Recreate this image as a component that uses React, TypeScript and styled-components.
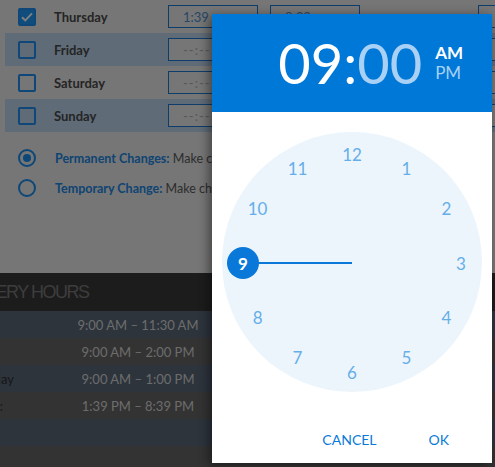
import React from 'react';
import styled, { createGlobalStyle } from 'styled-components';

const GlobalStyle = createGlobalStyle`
  html, body { margin: 0; padding: 0; }
  body { font-family: Lato, "Open Sans", "Liberation Sans", sans-serif; background: #767676; }
`;

const Viewport = styled.div`
  position: relative;
  width: 495px;
  height: 467px;
  overflow: hidden;
  background: #ececec;
`;

const Schedule = styled.section`
  height: 273px;
  background: #ececec;
  display: flex;
  flex-direction: column;
`;

const DayRow = styled.div<{ $striped?: boolean }>`
  height: 33px;
  margin-left: 5px;
  padding-left: 13px;
  display: flex;
  align-items: center;
  background: ${p => (p.$striped ? '#bed6ee' : 'transparent')};
`;

const Check = styled.span<{ $checked?: boolean }>`
  box-sizing: border-box;
  width: 18px;
  height: 18px;
  border: 2px solid #1c8ef0;
  border-radius: 2px;
  background: ${p => (p.$checked ? '#1c9af8' : 'transparent')};
  display: flex;
  align-items: center;
  justify-content: center;
  flex: none;
`;

const DayName = styled.span`
  margin-left: 18px;
  width: 114px;
  flex: none;
  font-size: 13px;
  font-weight: 700;
  color: #4a4a4a;
`;

const TimeBox = styled.span<{ $gap: number; $filled?: boolean }>`
  box-sizing: border-box;
  margin-left: ${p => p.$gap}px;
  width: 90px;
  height: 23px;
  flex: none;
  border: 1px solid #1c7ad8;
  background: #ececec;
  display: flex;
  align-items: center;
  padding-left: 14px;
  font-size: 13px;
  color: ${p => (p.$filled ? '#4f8fd0' : '#b0b0b0')};
  letter-spacing: ${p => (p.$filled ? '0' : '1px')};
`;

const Options = styled.div`
  margin-top: 17px;
  padding-left: 18px;
  display: flex;
  flex-direction: column;
  gap: 12px;
`;

const OptionRow = styled.div`
  display: flex;
  align-items: center;
  height: 18px;
  white-space: nowrap;
`;

const Radio = styled.span<{ $on?: boolean }>`
  box-sizing: border-box;
  width: 18px;
  height: 18px;
  border-radius: 50%;
  border: 2px solid #1a8ef0;
  display: flex;
  align-items: center;
  justify-content: center;
  flex: none;
  &::after {
    content: '';
    width: 8px;
    height: 8px;
    border-radius: 50%;
    background: ${p => (p.$on ? '#1a8ef0' : 'transparent')};
  }
`;

const OptionText = styled.span`
  margin-left: 19px;
  font-size: 12.5px;
  color: #5a5a5a;
`;

const OptionTitle = styled.b`
  color: #2088e6;
  font-weight: 700;
`;

const Delivery = styled.section`
  background: #666;
  display: flex;
  flex-direction: column;
`;

const DeliveryHead = styled.div`
  height: 38px;
  background: #383838;
  display: flex;
  align-items: center;
  overflow: hidden;
`;

const DeliveryTitle = styled.h2`
  margin: 0 0 0 -49px;
  font-family: "Liberation Sans", Arial, sans-serif;
  font-weight: 300;
  font-size: 18px;
  letter-spacing: -1.5px;
  color: #7a7a7a;
  white-space: nowrap;
`;

const HourRow = styled.div<{ $blue?: boolean }>`
  height: 27px;
  display: flex;
  align-items: center;
  background: ${p => (p.$blue ? '#5a6878' : '#666')};
  font-size: 13px;
  color: #d8d8d8;
`;

const HourDay = styled.span`
  margin-left: -53px;
  width: 66px;
  flex: none;
  white-space: nowrap;
  color: #2e2e2e;
`;

const HourTime = styled.span`
  width: 250px;
  flex: none;
  text-align: center;
  white-space: nowrap;
`;

const Backdrop = styled.div`
  position: absolute;
  inset: 0;
  background: rgba(0, 0, 0, 0.5);
`;

const Dialog = styled.div`
  position: absolute;
  left: 212px;
  top: 14px;
  width: 280px;
  height: 449px;
  background: #fff;
  box-shadow: -3px 2px 10px rgba(0, 0, 0, 0.45);
  display: flex;
  flex-direction: column;
`;

const Header = styled.div`
  height: 98px;
  background: #0078d7;
  display: flex;
  align-items: center;
  justify-content: flex-end;
  padding-right: 29px;
  gap: 13px;
  color: #fff;
`;

const BigTime = styled.div`
  font-size: 56px;
  line-height: 1;
  font-weight: 400;
`;

const Faded = styled.span`
  color: #a9d1f5;
`;

const Meridiem = styled.div`
  display: flex;
  flex-direction: column;
  font-size: 17px;
  line-height: 20px;
`;

const MeridiemItem = styled.span<{ $active?: boolean }>`
  color: ${p => (p.$active ? '#fff' : '#a9d1f5')};
  font-weight: ${p => (p.$active ? 700 : 400)};
`;

const Face = styled.div`
  margin: 20px auto 0;
  width: 260px;
  height: 260px;
`;

const Footer = styled.div`
  margin-top: 29px;
  height: 36px;
  display: flex;
  justify-content: flex-end;
  align-items: center;
  gap: 22px;
  padding-right: 28px;
`;

const FlatButton = styled.button`
  border: none;
  background: transparent;
  padding: 0 15px;
  height: 36px;
  font-family: Lato, "Open Sans", sans-serif;
  font-size: 14px;
  color: #0a7ad9;
  cursor: pointer;
`;

const days = [
  { name: 'Thursday', checked: true, striped: false },
  { name: 'Friday', striped: true },
  { name: 'Saturday', striped: false },
  { name: 'Sunday', striped: true },
];

const hours = [
  { day: 'Monday', time: '9:00 AM – 11:30 AM', blue: true },
  { day: 'Tuesday', time: '9:00 AM – 2:00 PM' },
  { day: 'Wednesday', time: '9:00 AM – 1:00 PM', blue: true },
  { day: 'Thursday:', time: '1:39 PM – 8:39 PM' },
  { day: '', time: '', blue: true },
  { day: '', time: '' },
];

function ClockFace() {
  const cx = 130;
  const cy = 131;
  const r = 109;
  return (
    <svg width="260" height="260" viewBox="0 0 260 260">
      <circle cx="130" cy="130" r="130" fill="#ecf5fc" />
      <line x1={cx - r + 15} y1={cy} x2={cx} y2={cy} stroke="#0a78d8" strokeWidth="2" />
      <circle cx={cx - r} cy={cy} r="16" fill="#0a78d8" />
      {Array.from({ length: 12 }, (_, i) => {
        const n = i + 1;
        const a = (n * Math.PI) / 6;
        const x = cx + r * Math.sin(a);
        const y = cy - r * Math.cos(a);
        const sel = n === 9;
        return (
          <text
            key={n}
            x={x}
            y={y}
            textAnchor="middle"
            dominantBaseline="central"
            fontFamily="Lato, 'Open Sans', sans-serif"
            fontSize="17"
            fontWeight={sel ? 700 : 400}
            fill={sel ? '#fff' : '#66aee9'}
          >
            {n}
          </text>
        );
      })}
    </svg>
  );
}

export default function App() {
  return (
    <>
      <GlobalStyle />
      <Viewport>
        <Schedule>
          {days.map(d => (
            <DayRow key={d.name} $striped={d.striped}>
              <Check $checked={d.checked}>
                {d.checked && (
                  <svg width="12" height="10" viewBox="0 0 12 10">
                    <path d="M1 5.2 L4.3 8.4 L11 1.4" fill="none" stroke="#fff" strokeWidth="2" />
                  </svg>
                )}
              </Check>
              <DayName>{d.name}</DayName>
              <TimeBox $gap={0} $filled={d.checked}>{d.checked ? '1:39 pm' : '--:-- --'}</TimeBox>
              <TimeBox $gap={12} $filled={d.checked}>{d.checked ? '8:39 pm' : '--:-- --'}</TimeBox>
              <TimeBox $gap={118} $filled={d.checked} />
            </DayRow>
          ))}
          <Options>
            <OptionRow>
              <Radio $on />
              <OptionText>
                <OptionTitle>Permanent Changes:</OptionTitle> Make changes to your regular weekly hours
              </OptionText>
            </OptionRow>
            <OptionRow>
              <Radio />
              <OptionText>
                <OptionTitle>Temporary Change:</OptionTitle> Make changes for this week only
              </OptionText>
            </OptionRow>
          </Options>
        </Schedule>
        <Delivery>
          <DeliveryHead>
            <DeliveryTitle>DELIVERY HOURS</DeliveryTitle>
          </DeliveryHead>
          {hours.map((h, i) => (
            <HourRow key={i} $blue={h.blue}>
              <HourDay>{h.day}</HourDay>
              <HourTime>{h.time}</HourTime>
            </HourRow>
          ))}
        </Delivery>
        <Backdrop />
        <Dialog>
          <Header>
            <BigTime>
              09:<Faded>00</Faded>
            </BigTime>
            <Meridiem>
              <MeridiemItem $active>AM</MeridiemItem>
              <MeridiemItem>PM</MeridiemItem>
            </Meridiem>
          </Header>
          <Face>
            <ClockFace />
          </Face>
          <Footer>
            <FlatButton>CANCEL</FlatButton>
            <FlatButton>OK</FlatButton>
          </Footer>
        </Dialog>
      </Viewport>
    </>
  );
}
